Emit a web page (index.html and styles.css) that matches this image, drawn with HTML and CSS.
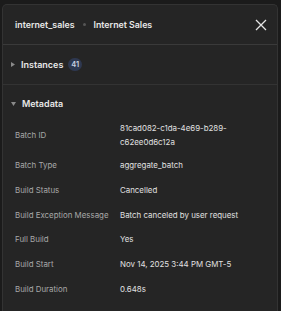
FILE: index.html
```html
<!DOCTYPE html>
<html>
<head>
<meta charset="utf-8">
<link rel="stylesheet" href="styles.css">
</head>
<body>
<div class="panel">
  <div class="header">
    <div class="crumbs">
      <span class="crumb">internet_sales</span>
      <span class="sep"></span>
      <span class="crumb">Internet Sales</span>
    </div>
    <svg class="close" width="12" height="12" viewBox="0 0 12 12"><path d="M1 1L11 11M11 1L1 11" stroke="#e6e6e6" stroke-width="1.3" fill="none"/></svg>
  </div>
  <div class="section">
    <div class="sec-head">
      <svg class="tri" width="4" height="5" viewBox="0 0 4 5"><path d="M0 0L4 2.5L0 5Z" fill="#8a8a8a"/></svg>
      <span class="sec-title">Instances</span>
      <span class="badge">41</span>
    </div>
  </div>
  <div class="section open">
    <div class="sec-head">
      <svg class="tri" width="5" height="4" viewBox="0 0 5 4"><path d="M0 0L5 0L2.5 4Z" fill="#8a8a8a"/></svg>
      <span class="sec-title">Metadata</span>
    </div>
    <div class="rows">
      <div class="row"><div class="label">Batch ID</div><div class="value">81cad082-c1da-4e69-b289-<br>c62ee0d6c12a</div></div>
      <div class="row"><div class="label">Batch Type</div><div class="value">aggregate_batch</div></div>
      <div class="row"><div class="label">Build Status</div><div class="value">Cancelled</div></div>
      <div class="row"><div class="label">Build Exception Message</div><div class="value">Batch canceled by user request</div></div>
      <div class="row"><div class="label">Full Build</div><div class="value">Yes</div></div>
      <div class="row"><div class="label">Build Start</div><div class="value">Nov 14, 2025 3:44 PM GMT-5</div></div>
      <div class="row"><div class="label">Build Duration</div><div class="value">0.648s</div></div>
    </div>
  </div>
</div>
</body>
</html>
```
FILE: styles.css
```css
* { box-sizing: border-box; }
html, body { margin: 0; padding: 0; }
body {
  background: #1b1b1b;
  font-family: Inter, "Liberation Sans", sans-serif;
  width: 281px;
  height: 311px;
  overflow: hidden;
  padding: 4px 3px 0 2px;
}
.panel {
  background: #252525;
  border: 1px solid #333;
  border-bottom: none;
  border-radius: 5px 5px 0 0;
  height: 307px;
}
.header {
  height: 40px;
  display: flex;
  align-items: center;
  justify-content: space-between;
  padding: 0 10px 0 12px;
  border-bottom: 1px solid #3a3a3a;
}
.crumbs { display: flex; align-items: center; gap: 8px; }
.crumb { color: #e8e8e8; font-size: 8.8px; font-weight: 600; }
.sep { width: 3px; height: 3px; border-radius: 50%; background: #555; }
.close { display: block; }
.section { border-bottom: 1px solid #333; }
.section.open { border-bottom: none; }
.sec-head {
  height: 39px;
  display: flex;
  align-items: center;
  padding-left: 8px;
}
.section.open .sec-head {
  height: 31px;
  padding-top: 6px;
}
.tri { display: block; margin-right: 6px; }
.sec-title { color: #e8e8e8; font-size: 9px; font-weight: 600; }
.badge {
  margin-left: 5px;
  height: 13px;
  min-width: 13px;
  padding: 0 3px;
  border-radius: 7px;
  background: #2e3850;
  color: #c8d0e0;
  font-size: 7.5px;
  font-weight: 600;
  display: flex;
  align-items: center;
  justify-content: center;
}
.rows { padding: 0 12px; }
.row {
  display: flex;
  align-items: center;
  min-height: 24.7px;
  padding: 4.5px 0;
  font-size: 7.9px;
  line-height: 14px;
}
.label { width: 105px; flex: none; color: #a8a8a8; }
.value { color: #e0e0e0; }
```
